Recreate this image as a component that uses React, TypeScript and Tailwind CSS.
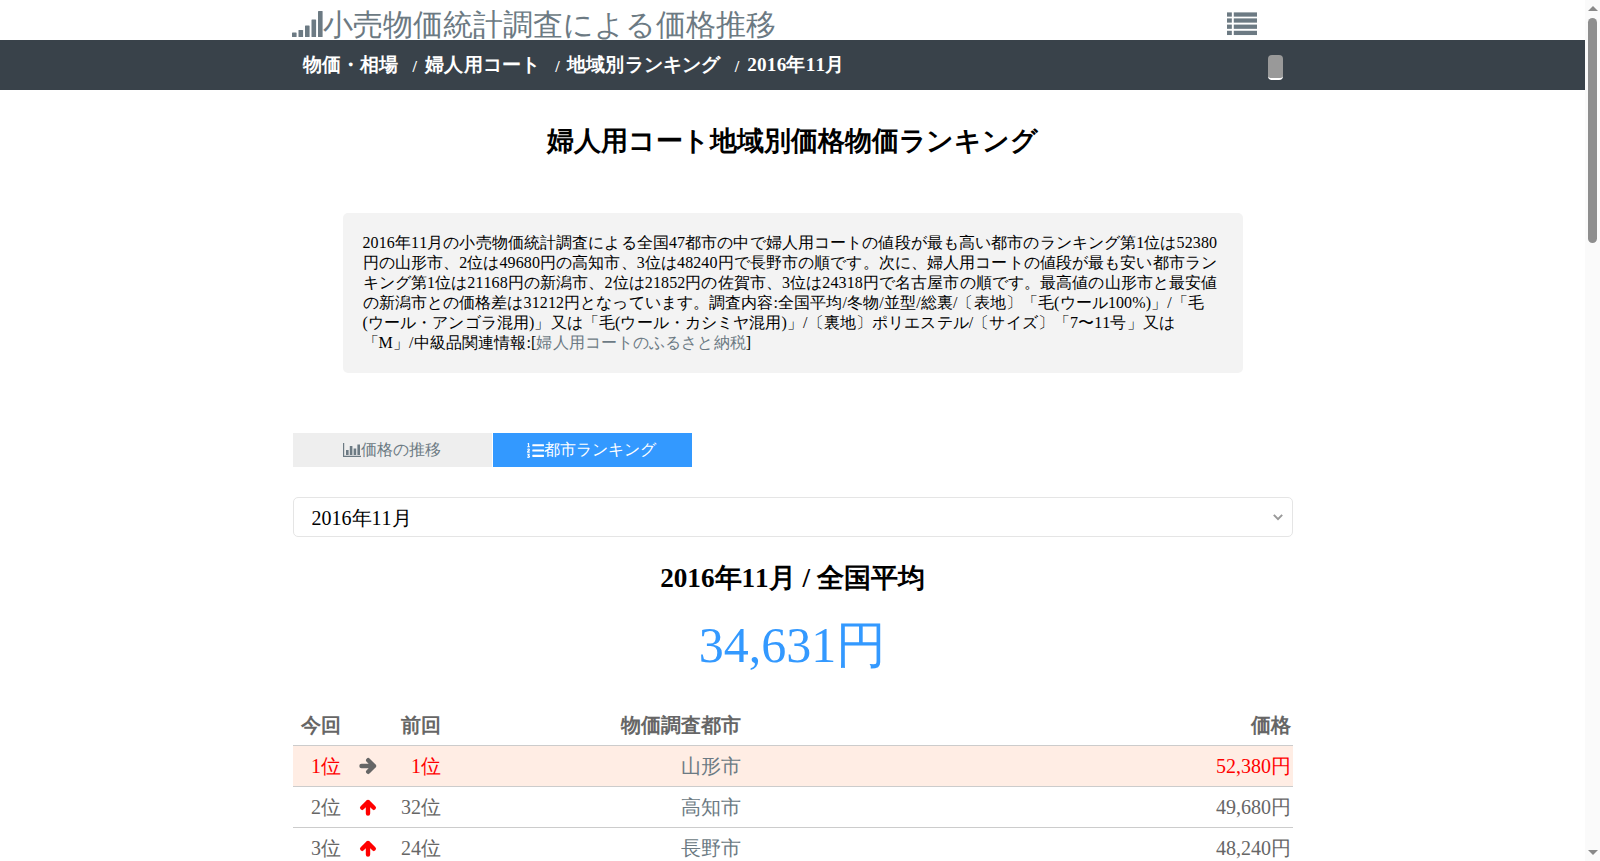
import { FaListOl } from "react-icons/fa";

const rows = [
  { rank: "1位", prev: "1位", city: "山形市", price: "52,380円", top: true },
  { rank: "2位", prev: "32位", city: "高知市", price: "49,680円", top: false },
  { rank: "3位", prev: "24位", city: "長野市", price: "48,240円", top: false },
];

const SignalIcon = () => (
  <svg viewBox="0 0 31 26" className="mb-[8px] ml-[-1px] h-[26px] w-[31px]" fill="currentColor">
    <rect x="0" y="21.5" width="4.6" height="4.5" rx="0.6" />
    <rect x="6.5" y="19" width="4.6" height="7" rx="0.6" />
    <rect x="13" y="14.5" width="4.6" height="11.5" rx="0.6" />
    <rect x="19.5" y="8.5" width="4.6" height="17.5" rx="0.6" />
    <rect x="26" y="0" width="4.6" height="26" rx="0.6" />
  </svg>
);

const ListIcon = () => (
  <svg viewBox="0 0 31 24" className="mr-[36px] mt-[12px] h-[24px] w-[30px] self-start text-[#6c7a83]" fill="currentColor">
    <rect x="0" y="0" width="5" height="4.4" />
    <rect x="7" y="0" width="24" height="4.4" />
    <rect x="0" y="6.2" width="5" height="4.4" />
    <rect x="7" y="6.2" width="24" height="4.4" />
    <rect x="0" y="12.6" width="5" height="4.4" />
    <rect x="7" y="12.6" width="24" height="4.4" />
    <rect x="0" y="19" width="5" height="4.4" />
    <rect x="7" y="19" width="24" height="4.4" />
  </svg>
);

const ChartIcon = () => (
  <svg viewBox="0 0 18 14" className="h-[14px] w-[18px]" fill="currentColor">
    <path d="M0 0h1.2v12.8H18V14H0z" />
    <rect x="3" y="7" width="2.6" height="5" />
    <rect x="6.8" y="3" width="2.6" height="9" />
    <rect x="10.6" y="5.5" width="2.6" height="6.5" />
    <rect x="14.4" y="1.5" width="2.6" height="10.5" />
  </svg>
);

const Crumbs = () => (
  <div className="flex items-center pl-[10px] text-[19.2px] font-bold tracking-[0.2px] text-white">
    <span>物価・相場</span>
    <span className="ml-[14px] mr-[8px] mt-[3px] text-[16px]">/</span>
    <span>婦人用コート</span>
    <span className="ml-[15px] mr-[7px] mt-[3px] text-[16px]">/</span>
    <span>地域別ランキング</span>
    <span className="ml-[14px] mr-[8px] mt-[3px] text-[16px]">/</span>
    <span>2016年11月</span>
  </div>
);

const FakeScrollbar = () => (
  <div className="flex h-full w-[15px] shrink-0 flex-col items-center bg-[#fafafa]">
    <div className="mt-[6px] h-0 w-0 border-x-[5px] border-b-[5px] border-x-transparent border-b-[#888]" />
    <div className="mt-[7px] h-[225px] w-[9px] rounded-[5px] bg-[#8e8e8e]" />
    <div className="mb-[6px] mt-auto h-0 w-0 border-x-[5px] border-t-[5px] border-x-transparent border-t-[#888]" />
  </div>
);

const ArrowRight = () => (
  <svg viewBox="0 0 18 18" className="mx-auto h-[18px] w-[18px] text-[#666]" fill="none" stroke="currentColor" strokeWidth="4.4" strokeLinecap="round" strokeLinejoin="round">
    <path d="M2.5 9H15M9.2 3.2 15 9l-5.8 5.8" />
  </svg>
);

const ArrowUp = () => (
  <svg viewBox="0 0 18 18" className="mx-auto h-[18px] w-[18px] text-[#ff0000]" fill="none" stroke="currentColor" strokeWidth="4.4" strokeLinecap="round" strokeLinejoin="round">
    <path d="M9 15.5V4M3.2 9.8 9 4l5.8 5.8" />
  </svg>
);

export default function App() {
  return (
    <div className="flex h-[861px] w-full overflow-hidden bg-white font-['Liberation_Serif',serif] text-[16px] leading-[20px] text-black [font-kerning:none]">
      <div className="min-w-0 flex-1">
        <div className="mx-auto flex h-10 w-[1000px] items-center justify-between">
          <div className="flex items-end pt-[9px] text-[30px] leading-[40px] text-[#6c7a83]">
            <SignalIcon />
            <span>小売物価統計調査による価格推移</span>
          </div>
          <ListIcon />
        </div>

        <div className="h-[50px] bg-[#39424a]">
          <div className="mx-auto flex h-full w-[1000px] items-center justify-between">
            <Crumbs />
            <button className="mr-[10px] mt-[5px] h-[25px] w-[15px] rounded-[4px] border-b-2 border-white bg-[#999]" />
          </div>
        </div>

        <div className="mx-auto w-[1000px]">
          <h1 className="mt-[33px] text-center text-[27.2px] font-bold leading-[36px] tracking-[-0.12px]">婦人用コート地域別価格物価ランキング</h1>

          <div className="mx-auto mt-[54px] w-[900px] rounded-[5px] bg-[#f3f3f3] p-[20px] tracking-[0.11px]">
            2016年11月の小売物価統計調査による全国47都市の中で婦人用コートの値段が最も高い都市のランキング第1位は52380円の山形市、2位は49680円の高知市、3位は48240円で長野市の順です。次に、婦人用コートの値段が最も安い都市ランキング第1位は21168円の新潟市、2位は21852円の佐賀市、3位は24318円で名古屋市の順です。最高値の山形市と最安値の新潟市との価格差は31212円となっています。調査内容:全国平均/冬物/並型/総裏/〔表地〕「毛(ウール100%)」/「毛(ウール・アンゴラ混用)」又は「毛(ウール・カシミヤ混用)」/〔裏地〕ポリエステル/〔サイズ〕「7〜11号」又は「M」/中級品関連情報:[<a className="text-[#6c7a83]">婦人用コートのふるさと納税</a>]
          </div>

          <div className="mt-[60px] flex gap-[1px]">
            <div className="flex h-[34px] w-[199px] items-center justify-center bg-[#eee] text-[#6c7a83]">
              <ChartIcon />
              <span>価格の推移</span>
            </div>
            <div className="flex h-[34px] w-[199px] items-center justify-center bg-[#3399ff] pr-[2px] text-white">
              <FaListOl className="h-[17px] w-[17px]" />
              <span>都市ランキング</span>
            </div>
          </div>

          <div className="relative mt-[30px]">
            <select className="h-10 w-full appearance-none rounded-[5px] border border-[#e5e5e5] bg-white pl-[18px] pt-[2px] text-[20px] outline-none">
              <option>2016年11月</option>
            </select>
            <svg viewBox="0 0 12 8" className="pointer-events-none absolute right-[10px] top-[16px] h-[8px] w-[10px]" fill="none" stroke="#999" strokeWidth="2.4">
              <path d="M1 1.5l5 5 5-5" />
            </svg>
          </div>

          <h2 className="mt-[25px] text-center text-[27.2px] font-bold leading-[32px]">2016年11月 / 全国平均</h2>
          <div className="mt-[21px] text-center text-[50px] leading-[60px] text-[#3399ff]">34,631円</div>

          <table className="mt-[30px] w-full table-fixed border-collapse text-[20px] leading-[24px] text-[#666]">
            <thead>
              <tr className="font-bold">
                <th className="w-[50px] py-[8px] pr-[1.5px] text-right">今回</th>
                <th className="w-[50px]" />
                <th className="w-[50px] py-[8px] pr-[1.5px] text-right">前回</th>
                <th className="w-[300px] py-[8px] pr-[1.5px] text-right">物価調査都市</th>
                <th className="py-[8px] pr-[1.5px] text-right">価格</th>
              </tr>
            </thead>
            <tbody>
              {rows.map((r) => (
                <tr key={r.rank} className={r.top ? "border-y border-[#ccc] bg-[#ffede4] text-[#ff0000]" : "border-y border-[#ccc]"}>
                  <td className="py-[8px] pr-[1.5px] text-right">{r.rank}</td>
                  <td className="py-[8px]">{r.top ? <ArrowRight /> : <ArrowUp />}</td>
                  <td className="py-[8px] pr-[1.5px] text-right">{r.prev}</td>
                  <td className="py-[8px] pr-[1.5px] text-right text-[#6c7a83]">{r.city}</td>
                  <td className="py-[8px] pr-[1.5px] text-right">{r.price}</td>
                </tr>
              ))}
            </tbody>
          </table>
        </div>
      </div>
      <FakeScrollbar />
    </div>
  );
}
